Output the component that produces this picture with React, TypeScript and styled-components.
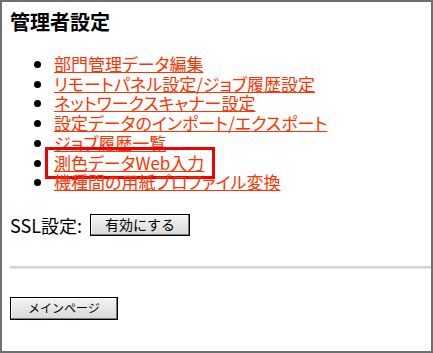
import { createGlobalStyle, styled } from "styled-components";

const GlobalStyle = createGlobalStyle`
  html, body {
    margin: 0;
    padding: 0;
    background: #ffffff;
  }
  body {
    font-family: "Noto Sans CJK JP", "Noto Sans", sans-serif;
    color: #000000;
  }
`;

const Frame = styled.div`
  box-sizing: border-box;
  width: 433px;
  height: 353px;
  border: 2px solid #6f6f6f;
  padding: 8px 0 0 8px;
  overflow: hidden;
`;

const Title = styled.h1`
  margin: 0;
  font-size: 20px;
  line-height: 24px;
  font-weight: 700;
`;

const MenuList = styled.ul`
  margin: 20px 0 0 0;
  padding-left: 44px;
  list-style: disc;
  font-size: 17px;
  line-height: 19.7px;
  font-feature-settings: "palt" 1;
`;

const MenuItem = styled.li`
  color: #000000;
`;

const MenuLink = styled.a<{ $marked?: boolean }>`
  position: relative;
  color: #ff3300;
  text-decoration: underline;
  text-underline-offset: 1px;
  cursor: pointer;

  ${({ $marked }) =>
    $marked &&
    `
    &::after {
      content: "";
      position: absolute;
      left: -9px;
      right: -11px;
      top: -3px;
      bottom: -4px;
      border: 3px solid #f00000;
      pointer-events: none;
    }
  `}
`;

const SslRow = styled.div`
  display: flex;
  align-items: center;
  margin-top: 20px;
  font-size: 18px;
  gap: 8px;
`;

const BevelButton = styled.button<{ $width: number; $height: number; $size: number }>`
  box-sizing: border-box;
  width: ${({ $width }) => $width}px;
  height: ${({ $height }) => $height}px;
  padding: 0 0 1px 0;
  border: 1px solid #000000;
  box-shadow: inset -1px -1px 0 #7a7a7a, inset 1px 1px 0 #ffffff;
  background: linear-gradient(#f4f4f4, #d9d9d9);
  font-family: "Noto Sans CJK JP", sans-serif;
  font-size: ${({ $size }) => $size}px;
  line-height: 1;
  color: #000000;
  cursor: pointer;
`;

const Divider = styled.div`
  margin-top: 28px;
  height: 0;
  border-top: 2px solid #d3d3d3;
  border-bottom: 1px solid #e6e6e6;
`;

const Footer = styled.div`
  margin-top: 28px;
  display: flex;
`;

const items = [
  "部門管理データ編集",
  "リモートパネル設定/ジョブ履歴設定",
  "ネットワークスキャナー設定",
  "設定データのインポート/エクスポート",
  "ジョブ履歴一覧",
  "測色データWeb入力",
  "機種間の用紙プロファイル変換",
];

export default function App() {
  return (
    <>
      <GlobalStyle />
      <Frame>
        <Title>管理者設定</Title>
        <MenuList>
          {items.map((label, i) => (
            <MenuItem key={label}>
              <MenuLink $marked={i === 5}>{label}</MenuLink>
            </MenuItem>
          ))}
        </MenuList>
        <SslRow>
          <span>SSL設定:</span>
          <BevelButton $width={100} $height={22} $size={14}>
            有効にする
          </BevelButton>
        </SslRow>
        <Divider />
        <Footer>
          <BevelButton $width={108} $height={23} $size={12}>
            メインページ
          </BevelButton>
        </Footer>
      </Frame>
    </>
  );
}
